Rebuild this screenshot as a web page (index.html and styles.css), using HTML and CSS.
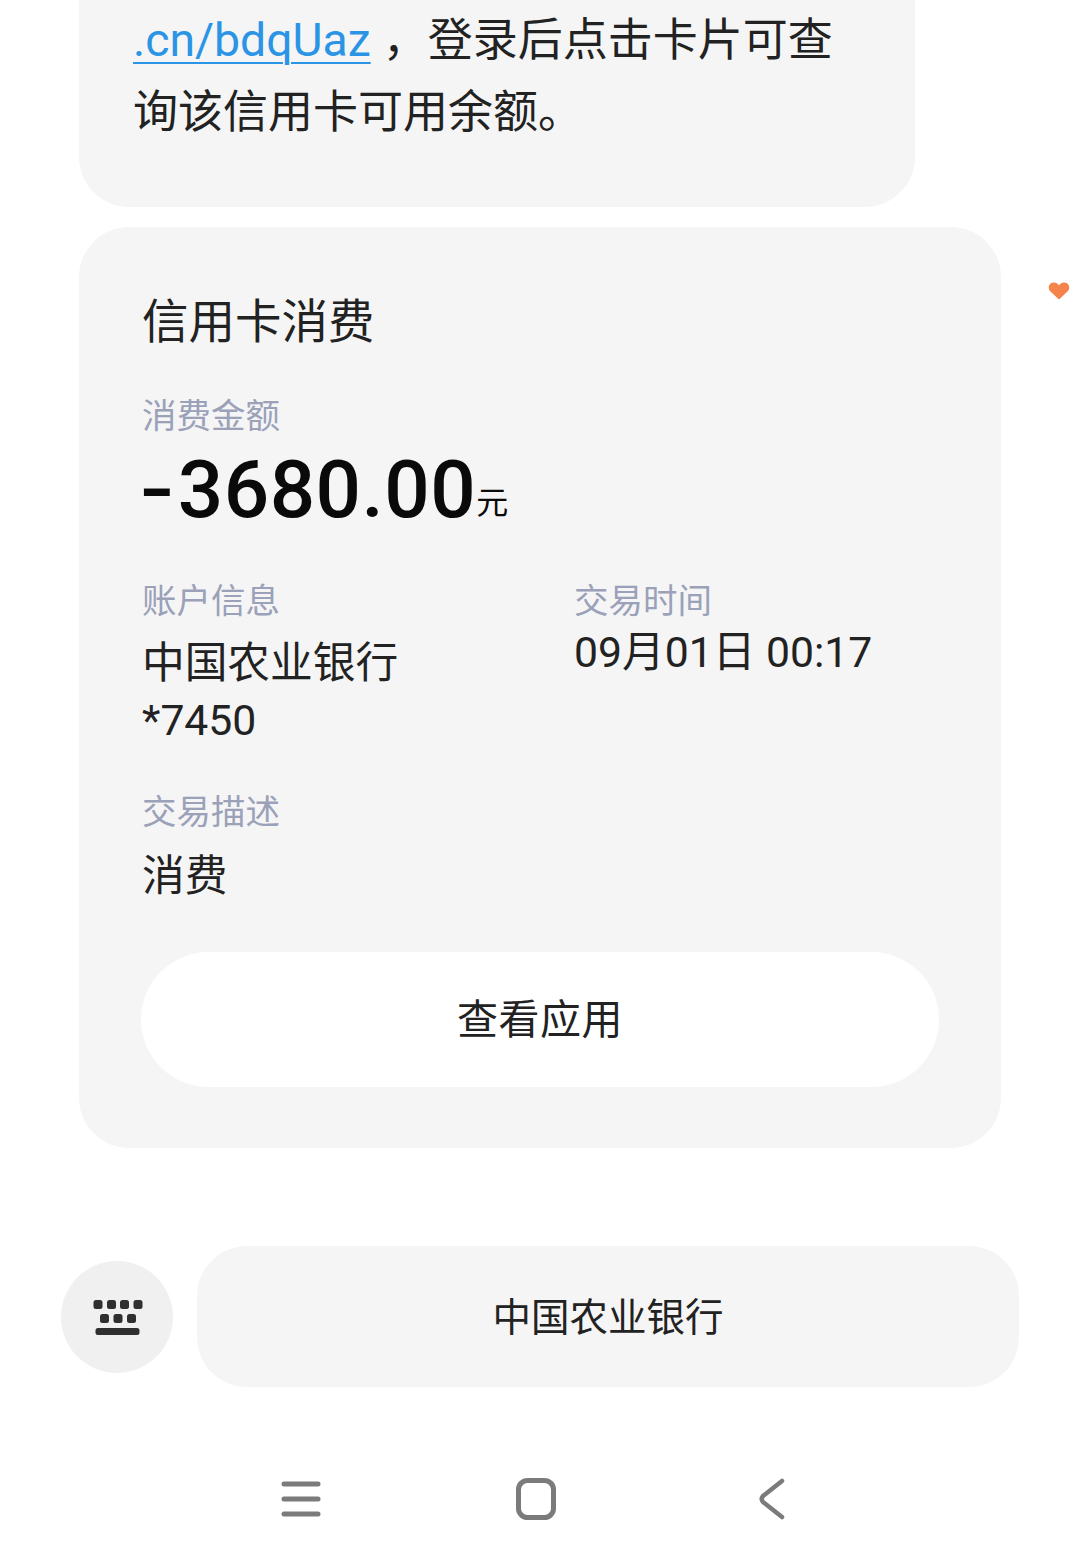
FILE: index.html
```html
<!DOCTYPE html>
<html lang="zh-CN">

<head>
    <meta charset="UTF-8">
    <title>信用卡消费</title>
    <link rel="stylesheet" href="styles.css">
</head>

<body>

    <section class="bubble">
        <p class="line"><a class="link">.cn/bdqUaz</a><span class="comma">，</span>登录后点击卡片可查</p>
        <p class="line">询该信用卡可用余额。</p>
    </section>

    <section class="card">
        <h2 class="card-title">信用卡消费</h2>

        <p class="label">消费金额</p>
        <p class="amount"><span class="minus">-</span>3680.00<span class="unit">元</span></p>

        <div class="info-grid">
            <div class="info-left">
                <p class="label">账户信息</p>
                <p class="value">中国农业银行<br>*7450</p>
            </div>
            <div>
                <p class="label">交易时间</p>
                <p class="value time">09月01日 00:17</p>
            </div>
        </div>

        <p class="label">交易描述</p>
        <p class="value desc">消费</p>

        <button class="view-btn">查看应用</button>
    </section>

    <svg class="heart" viewBox="0 0 22 18">
        <path d="M11 17.5 L2.2 9.2 C-0.6 6.4 0.6 1 5.4 0.6 C7.8 0.4 9.8 1.6 11 3.4 C12.2 1.6 14.2 0.4 16.6 0.6 C21.4 1 22.6 6.4 19.8 9.2 Z" fill="#f5834c" />
    </svg>

    <div class="reply-bar">
        <div class="keyboard">
            <svg class="keyboard-icon" width="50" height="36" viewBox="0 0 50 36">
                <g fill="#2f2f2f">
                    <rect x="0.500" y="0" width="9" height="9" rx="2.5" />
                    <rect x="14" y="0" width="9" height="9" rx="2.5" />
                    <rect x="27" y="0" width="9" height="9" rx="2.5" />
                    <rect x="40.500" y="0" width="9" height="9" rx="2.5" />
                    <rect x="7" y="14" width="9" height="9" rx="2.5" />
                    <rect x="20.500" y="14" width="9" height="9" rx="2.5" />
                    <rect x="34" y="14" width="9" height="9" rx="2.500" />
                    <rect x="2.500" y="28" width="44" height="7" rx="2.5" />
                </g>
            </svg>
        </div>
        <div class="quick-reply">中国农业银行</div>
    </div>

    <nav class="nav-bar">
        <svg width="40" height="40" viewBox="0 0 40 40">
            <g stroke="#7b7b7b" stroke-width="5" stroke-linecap="round">
                <line x1="3" y1="5" x2="37" y2="5" />
                <line x1="3" y1="20" x2="37" y2="20" />
                <line x1="3" y1="35" x2="37" y2="35" />
            </g>
        </svg>
        <svg width="40" height="42" viewBox="0 0 40 42">
            <rect x="2.500" y="2.500" width="35" height="37" rx="9" fill="none" stroke="#7b7b7b" stroke-width="5" />
        </svg>
        <svg class="back-icon" width="28" height="42" viewBox="0 0 28 42">
            <path d="M24 3 L5 18 Q2.500 21 5 24 L24 39" fill="none" stroke="#7b7b7b" stroke-width="4.500" stroke-linecap="round" />
        </svg>
    </nav>

</body>

</html>
```

FILE: styles.css
```css
* {
    box-sizing: border-box;
}

body {
    position: relative;
    margin: 0;
    height: 1568px;
    overflow: hidden;
    background-color: #ffffff;
    font-family: "Noto Sans CJK SC", "Noto Sans", sans-serif;
    color: #222222;
}

p,
h2 {
    margin: 0;
    font-weight: 400;
}

.bubble {
    width: 836px;
    height: 207px;
    margin-left: 79px;
    padding: 1px 0 0 54px;
    background-color: #f5f5f5;
    border-radius: 0 0 50px 50px;
}

.line {
    height: 72px;
    font-size: 45px;
    line-height: 72px;
    white-space: nowrap;
}

.link {
    font-family: "Roboto", "Noto Sans", sans-serif;
    font-size: 46.3px;
    color: #2b94e4;
    text-decoration: underline;
    text-decoration-thickness: 2px;
    text-underline-offset: 6px;
}

.comma {
    margin: 0 0 0 12px;
}

.card {
    width: 922px;
    height: 921px;
    margin: 20px 0 0 79px;
    padding: 59px 62px 0 63px;
    background-color: #f5f5f5;
    border-radius: 50px;
}

.card-title {
    font-size: 46.5px;
    line-height: 64px;
    margin-bottom: 41px;
}

.label {
    font-size: 34.500px;
    line-height: 44px;
    color: #9aa1b8;
}

.amount {
    font-family: "Roboto", "Noto Sans", sans-serif;
    font-size: 80px;
    font-weight: 500;
    line-height: 90px;
    letter-spacing: 0.5px;
    color: #0a0a0a;
    margin-top: 10px;
    margin-bottom: 28px;
}

.minus {
    display: inline-block;
    margin: 0 10px 0 -2px;
    transform: scaleX(1.25);
    transform-origin: left center;
}

.unit {
    position: relative;
    top: -3px;
    font-family: "Noto Sans CJK SC", sans-serif;
    font-size: 32px;
    font-weight: 400;
    letter-spacing: 0;
}

.info-grid {
    display: grid;
    grid-template-columns: 432px 1fr;
    margin-bottom: 38px;
}

.value {
    font-family: "Roboto", "Noto Sans CJK SC", sans-serif;
    font-size: 42.700px;
    line-height: 57px;
    margin-top: 15px;
}

.time {
    margin-top: 4px;
}

.desc {
    margin-top: 17px;
}

.view-btn {
    display: block;
    width: 798px;
    height: 135px;
    margin: 47px 0 0 -1px;
    padding: 0 0 8px;
    border: none;
    border-radius: 68px;
    background-color: #ffffff;
    font-family: "Noto Sans CJK SC", sans-serif;
    font-size: 41px;
    letter-spacing: 0.5px;
    color: #222222;
}

.heart {
    position: absolute;
    left: 1048px;
    top: 282px;
    width: 22px;
    height: 18px;
}

.reply-bar {
    display: flex;
    align-items: center;
    gap: 24px;
    margin: 98px 0 0 61px;
}

.keyboard {
    display: flex;
    align-items: center;
    justify-content: center;
    width: 112px;
    height: 112px;
    border-radius: 50%;
    background-color: #f0f0f0;
}

.keyboard-icon {
    margin: 3px 0 0 2px;
}

.quick-reply {
    width: 822px;
    height: 141px;
    border-radius: 50px;
    background-color: #f5f5f5;
    font-size: 38.500px;
    line-height: 137px;
    text-align: center;
    color: #222222;
}

.nav-bar {
    display: flex;
    align-items: center;
    gap: 195px;
    margin: 91px 0 0 281px;
}

.back-icon {
    margin-left: 7px;
}
```
